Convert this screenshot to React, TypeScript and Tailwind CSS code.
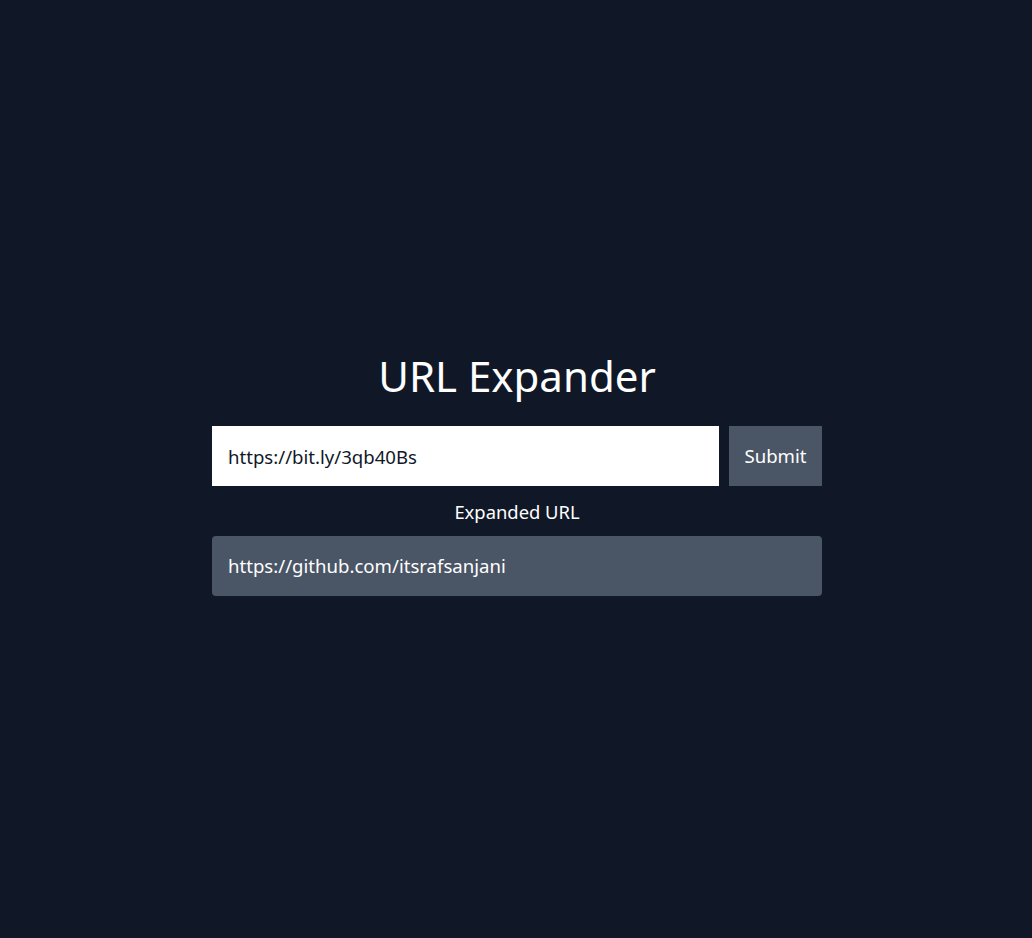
import React, { useState } from 'react';

const App: React.FC = () => {
  const [url, setUrl] = useState('https://bit.ly/3qb40Bs');
  const [expanded] = useState('https://github.com/itsrafsanjani');

  return (
    <div
      className="min-h-screen bg-gray-900 flex flex-col items-center justify-center pt-[10px] pl-[2px] text-white"
      style={{ fontFamily: '"Noto Sans", "Open Sans", sans-serif' }}
    >
      <h1 className="text-[42px] leading-[48px] mb-[26px]">URL Expander</h1>

      <form className="w-[610px] flex gap-[10px]" onSubmit={(e) => e.preventDefault()}>
        <input
          type="text"
          value={url}
          onChange={(e) => setUrl(e.target.value)}
          className="flex-1 h-[60px] bg-white text-gray-900 px-4 text-[18.6px] focus:outline-none"
        />
        <button type="submit" className="h-[60px] w-[93px] bg-gray-600 text-white text-[18.6px]">
          Submit
        </button>
      </form>

      <p className="mt-[14px] mb-[12px] text-[18.4px] leading-[24px]">Expanded URL</p>

      <div className="w-[610px] h-[60px] bg-gray-600 rounded flex items-center px-4 text-[18.6px]">
        {expanded}
      </div>
    </div>
  );
};

export default App;
